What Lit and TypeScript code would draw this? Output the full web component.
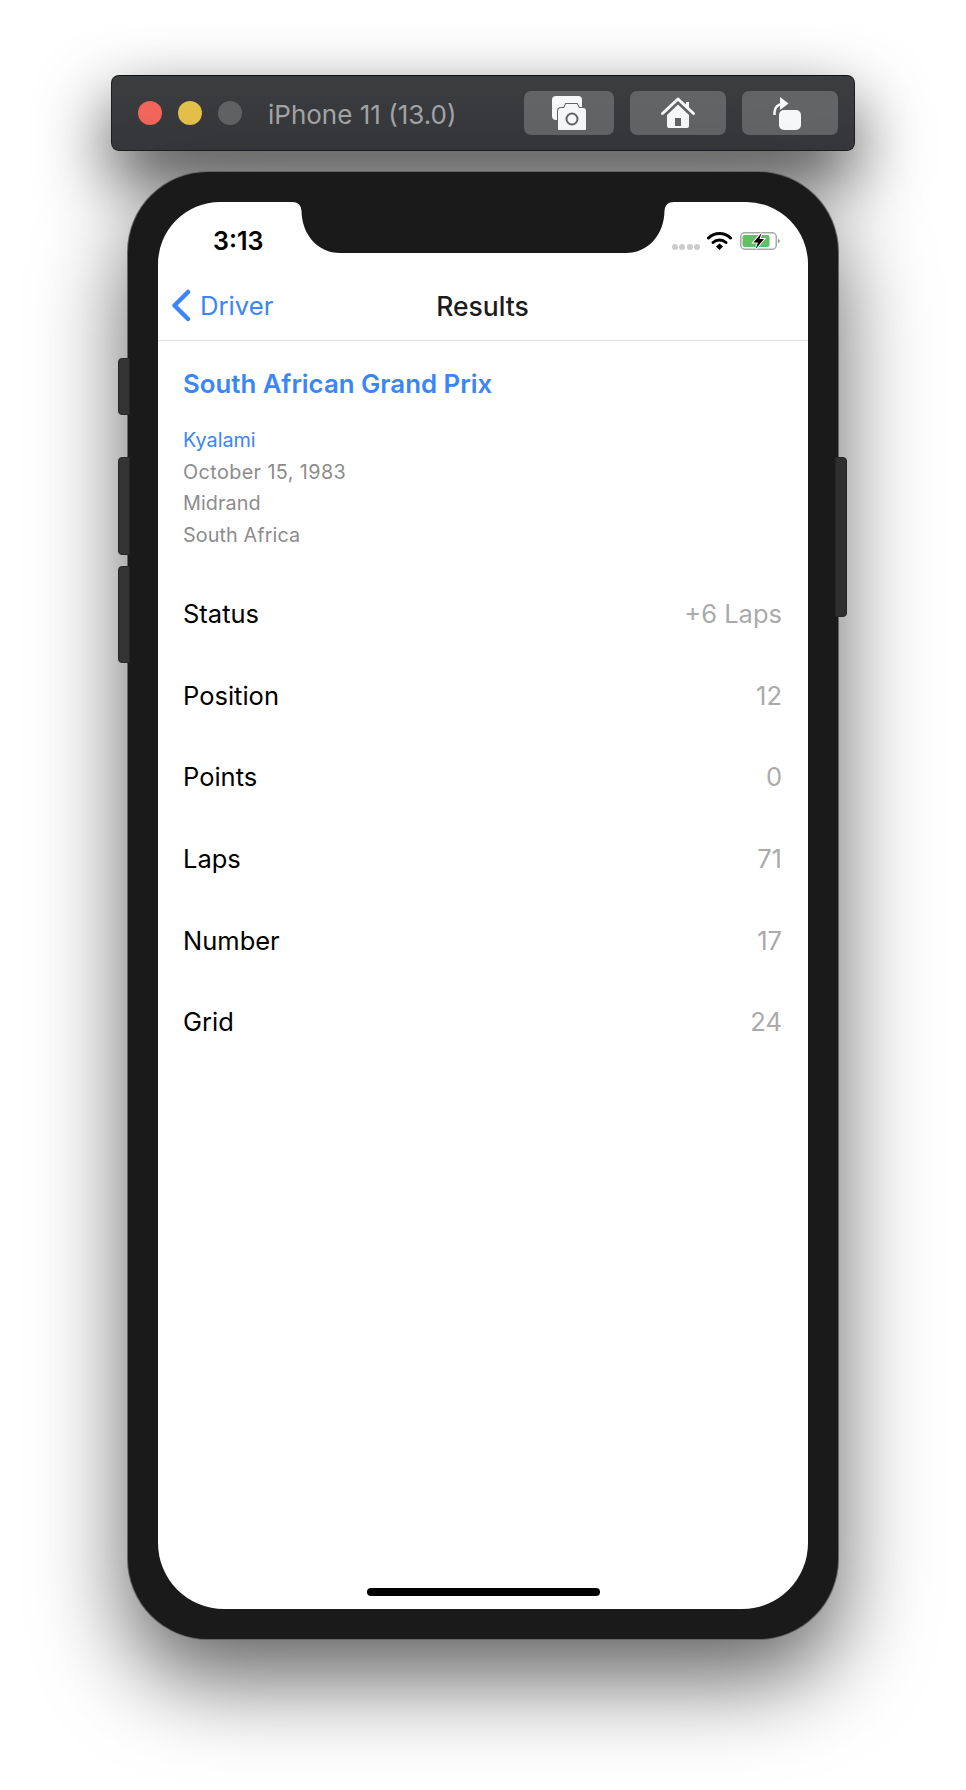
import { LitElement, html, css, svg } from 'lit';
import { customElement } from 'lit/decorators.js';

const rows = [
  ['Status', '+6 Laps'],
  ['Position', '12'],
  ['Points', '0'],
  ['Laps', '71'],
  ['Number', '17'],
  ['Grid', '24'],
];

const cameraIcon = svg`
  <rect x="2" y="2" width="30" height="24" rx="4" fill="#f7f8fa" />
  <path
    d="M8 35V17a3 3 0 0 1 3-3h3l2-4h11l2 4h4a3 3 0 0 1 3 3v18a1 1 0 0 1-1 1H9a1 1 0 0 1-1-1z"
    fill="#f7f8fa"
    stroke="#636466"
    stroke-width="2"
    paint-order="stroke"
  />
  <circle cx="22" cy="25" r="5.5" fill="none" stroke="#636466" stroke-width="2" />`;

const homeIcon = svg`
  <path d="M26 7h3v8l-3-3z" fill="#f7f8fa" />
  <path d="M2.500 18.500 18 4l15.500 14.500" fill="none" stroke="#f7f8fa" stroke-width="3" stroke-linecap="round" stroke-linejoin="round" />
  <path d="M7 20 18 9.500l11 10.500v11a2 2 0 0 1-2 2H9a2 2 0 0 1-2-2z" fill="#f7f8fa" />
  <rect x="15" y="23" width="6" height="8" fill="#636466" />`;

const rotateIcon = svg`
  <rect x="7" y="15" width="22" height="20" rx="5" fill="#f7f8fa" />
  <path d="M2.500 20v-3a8 8 0 0 1 8-8h2" fill="none" stroke="#f7f8fa" stroke-width="2.500" />
  <path d="M8 2l8.500 6.500L8 15z" fill="#f7f8fa" />`;

@customElement('app-root')
export class AppRoot extends LitElement {
  static override styles = css`
    :host {
      display: block;
      width: 966px;
      height: 1790px;
      background: #fff;
      overflow: hidden;
      font-family: Inter, 'Liberation Sans', sans-serif;
    }

    .stage {
      display: flex;
      flex-direction: column;
      padding: 75px 0 0 111px;
    }

    .toolbar {
      box-sizing: border-box;
      width: 744px;
      height: 76px;
      display: flex;
      align-items: center;
      padding: 0 16px 0 26px;
      border-radius: 8px;
      border: 1px solid #1d1d1f;
      border-top-color: #111;
      background: linear-gradient(#3c3d3f, #36373a);
      box-shadow: 0 30px 70px rgba(0, 0, 0, 0.75);
    }

    .light {
      width: 24px;
      height: 24px;
      border-radius: 50%;
      margin-right: 16px;
    }

    .red { background: #f0665b; }
    .yellow { background: #e3c04a; }
    .grey { background: #616263; margin-right: 26px; }

    .device {
      flex: 1;
      padding-top: 2px;
      font-size: 26px;
      color: #a3a4a6;
    }

    .tool {
      height: 44px;
      margin-left: 16px;
      border-radius: 7px;
      background: #636466;
      display: flex;
      align-items: center;
      justify-content: center;
    }

    .tool.shot { width: 90px; margin-left: 0; }
    .tool.wide { width: 96px; }

    .tool svg {
      width: 38px;
      height: 38px;
    }

    .phone {
      position: relative;
      box-sizing: border-box;
      width: 710px;
      height: 1467px;
      margin: 21px 0 0 17px;
      padding: 30px;
      border-radius: 80px;
      background: #1a1a1a;
      box-shadow: 0 0 0 1px #666, 0 40px 90px rgba(0, 0, 0, 0.62);
    }

    .side {
      position: absolute;
      width: 12px;
      background: #333;
      border: 1px solid #262626;
      box-sizing: border-box;
      border-radius: 4px 0 0 4px;
    }

    .mute { left: -10px; top: 186px; height: 57px; }
    .up { left: -10px; top: 285px; height: 98px; }
    .down { left: -10px; top: 394px; height: 97px; }

    .power {
      left: auto;
      right: -9px;
      top: 285px;
      height: 160px;
      background: #2f2f2f;
      border-radius: 0 4px 4px 0;
    }

    .screen {
      position: relative;
      height: 100%;
      background: #fff;
      border-radius: 62px 62px 66px 66px;
      overflow: hidden;
    }

    .notch {
      position: absolute;
      left: 134px;
      top: 0;
      width: 382px;
      height: 51px;
    }

    .status {
      display: flex;
      align-items: center;
      height: 78px;
      padding: 0 26px 0 55px;
      box-sizing: border-box;
    }

    .time {
      flex: 1;
      font-size: 25px;
      font-weight: 600;
      color: #000;
    }

    .dots {
      display: flex;
      gap: 1.5px;
      margin: 12px 7px 0 0;
    }

    .dots i {
      width: 6px;
      height: 6px;
      border-radius: 50%;
      background: #ccc;
    }

    .wifi { width: 25px; height: 18px; margin-right: 8px; }
    .battery { width: 42px; height: 18px; }

    .nav {
      height: 61px;
      box-sizing: border-box;
      padding: 0 14px 9px 13px;
      border-bottom: 1px solid #e4e4e6;
      display: grid;
      grid-template-columns: 1fr auto 1fr;
      align-items: center;
      font-size: 26.5px;
      font-weight: 500;
      color: #1c1c1e;
    }

    .back {
      display: flex;
      align-items: center;
      gap: 9px;
      font-size: 25.7px;
      font-weight: 400;
      color: #3a85f7;
    }

    .back svg { width: 20px; height: 33px; }

    .content {
      padding: 23px 26px 0 25px;
    }

    .race {
      margin: 0 0 21px;
      font-size: 25.8px;
      line-height: 40px;
      font-weight: 600;
      color: #3a85f7;
    }

    .meta {
      margin-bottom: 22px;
      font-size: 19.8px;
      line-height: 31.5px;
      letter-spacing: 0.1px;
      color: #8c8c8c;
    }

    .circuit { color: #3a85f7; letter-spacing: 0; }
    .date { letter-spacing: 0.4px; }

    .row {
      display: flex;
      justify-content: space-between;
      align-items: center;
      height: 81.6px;
      font-size: 25.5px;
      color: #000;
    }

    .value { color: #aaaaaa; }

    .home-bar {
      position: absolute;
      left: 209px;
      bottom: 13px;
      width: 233px;
      height: 8px;
      border-radius: 4px;
      background: #000;
    }
  `;

  override render() {
    return html`
      <div class="stage">
        <div class="toolbar">
          <span class="light red"></span>
          <span class="light yellow"></span>
          <span class="light grey"></span>
          <span class="device">iPhone 11 (13.0)</span>
          <span class="tool shot"><svg viewBox="0 0 38 38">${cameraIcon}</svg></span>
          <span class="tool wide"><svg viewBox="-1 -1 38 38">${homeIcon}</svg></span>
          <span class="tool wide"><svg viewBox="-1 -1 38 38">${rotateIcon}</svg></span>
        </div>
        <div class="phone">
          <span class="side mute"></span>
          <span class="side up"></span>
          <span class="side down"></span>
          <span class="side power"></span>
          <div class="screen">
            <svg class="notch" viewBox="0 0 382 51">
              <path d="M0 0C6 0 9 3 9.500 9C10 33 26 51 48 51H334C356 51 372 33 372.500 9C373 3 376 0 382 0Z" fill="#1a1a1a" />
            </svg>
            <div class="status">
              <span class="time">3:13</span>
              <span class="dots"><i></i><i></i><i></i><i></i></span>
              <svg class="wifi" viewBox="0 0 25 18">
                <path d="M1.500 6a16 16 0 0 1 22 0" fill="none" stroke="#000" stroke-width="3" stroke-linecap="round" />
                <path d="M6 10.500a9.500 9.500 0 0 1 13 0" fill="none" stroke="#000" stroke-width="3" stroke-linecap="round" />
                <path d="M9 14.500l3.500-3 3.500 3-3.500 3.500z" fill="#000" />
              </svg>
              <svg class="battery" viewBox="0 0 42 18">
                <rect x="0.750" y="0.750" width="35.500" height="16.500" rx="4" fill="#fff" stroke="#a8a8a8" stroke-width="1.500" />
                <rect x="2.500" y="3" width="27" height="12" rx="2" fill="#5dc264" />
                <path d="M38 6.500l2 2.500-2 2.500z" fill="#888" />
                <path d="M21.500 1 13.500 10.500h4.500L15.500 17l8.500-10h-4.500L21.500 1z" fill="#000" stroke="#fff" stroke-width="2" paint-order="stroke" />
              </svg>
            </div>
            <div class="nav">
              <span class="back">
                <svg viewBox="0 0 20 33">
                  <path d="M17 3 3.500 16.500 17 30" fill="none" stroke="#3a85f7" stroke-width="4.500" stroke-linecap="round" stroke-linejoin="round" />
                </svg>
                Driver
              </span>
              <span>Results</span>
            </div>
            <div class="content">
              <h1 class="race">South African Grand Prix</h1>
              <div class="meta">
                <div class="circuit">Kyalami</div>
                <div class="date">October 15, 1983</div>
                <div>Midrand</div>
                <div>South Africa</div>
              </div>
              ${rows.map(
                ([label, value]) => html`
                  <div class="row"><span>${label}</span><span class="value">${value}</span></div>
                `
              )}
            </div>
            <div class="home-bar"></div>
          </div>
        </div>
      </div>
    `;
  }
}

declare global {
  interface HTMLElementTagNameMap {
    'app-root': AppRoot;
  }
}
